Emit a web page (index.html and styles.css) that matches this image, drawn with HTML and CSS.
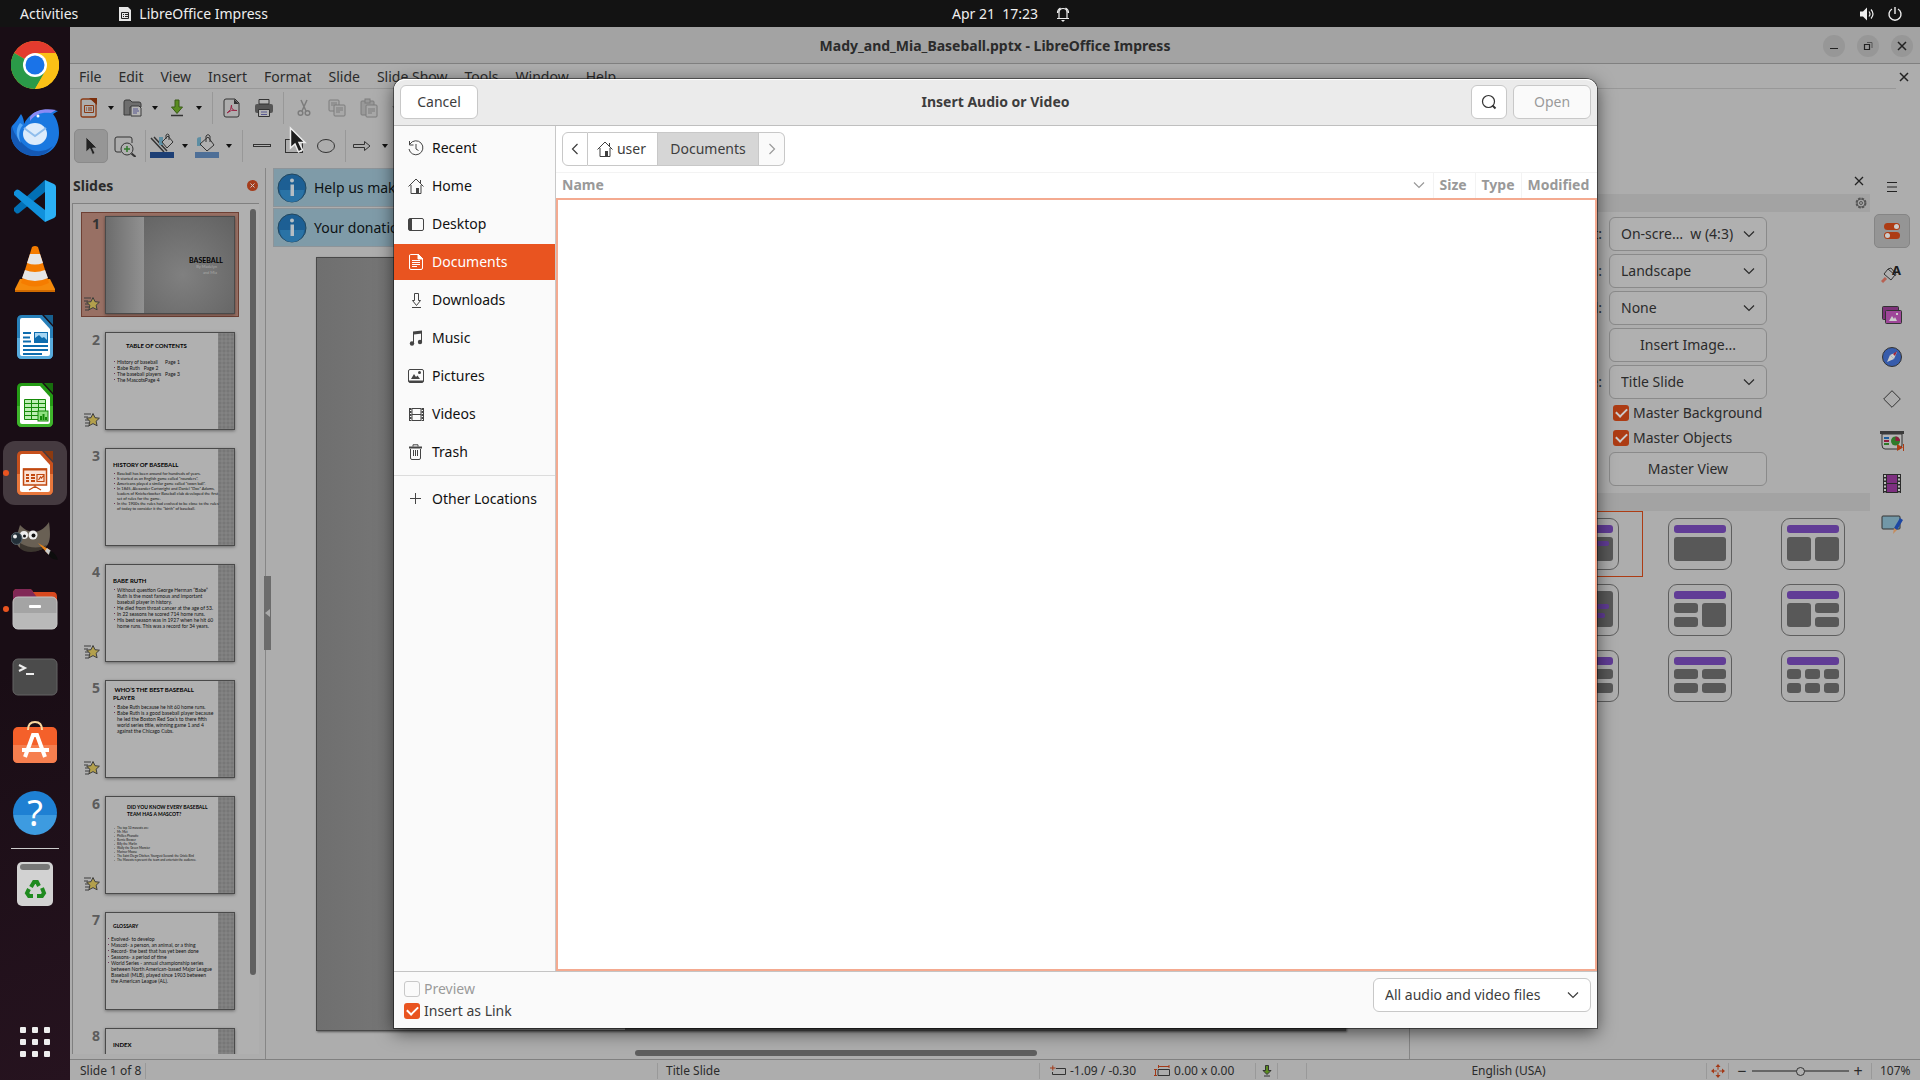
FILE: index.html
```html
<!DOCTYPE html>
<html lang="en">
<head>
    <meta charset="UTF-8">
    <meta name="viewport" content="width=device-width, initial-scale=1.0">
    <title>Mady_and_Mia_Baseball.pptx - LibreOffice Impress</title>
    <link rel="stylesheet" href="styles.css">
</head>
<body>
    <!-- shared icons -->
    <svg class="defs" width="0" height="0" aria-hidden="true">
        <symbol id="chevron" viewBox="0 0 12 12"><path d="M1 3.500l5 5 5-5" fill="none" stroke="currentColor" stroke-width="1.2"/></symbol>
        <symbol id="star" viewBox="0 0 16 16">
            <path d="M0 2h7M0 5h4M1 8h4M1 11h4M1 14h4" stroke="#3d3d3d"/>
            <path d="M9 1.500l2 4.200 4.400.5-3.300 3 1 4.600L9 11.600 4.900 13.800l1-4.600-3.300-3 4.400-.5z" fill="#b3a04c" stroke="#3d3d3d"/>
        </symbol>
        <symbol id="home" viewBox="0 0 16 16">
            <path d="M.5 8.500L8 1l7.500 7.500M3 7v8.500h10V7M12.500 2v3" fill="none" stroke="currentColor"/>
            <path d="M8 10h3v6H8z" fill="currentColor"/>
        </symbol>
        <symbol id="info" viewBox="0 0 30 30">
            <circle cx="15" cy="15" r="14" fill="#1d5f94" stroke="#22475f"/>
            <path d="M3 17a12 12 0 0 0 24 0z" fill="#2a73a6"/>
            <circle cx="15" cy="7.500" r="2" fill="#b5bdc3"/>
            <path d="M13.500 11.500h3.500V23h-3.500z" fill="#b5bdc3"/>
        </symbol>
    </svg>

    <header class="topbar">
        <button class="activities">Activities</button>
        <button class="app-menu">
            <svg width="14" height="16" viewBox="0 0 14 16"><path d="M1 1h9l3 3v11H1z" fill="#e6e6e6"/><path d="M3.500 6.500h7v6h-7zM5 8.500h1M7 8.500h3M5 10.500h1M7 10.500h3" fill="none" stroke="#222"/></svg>
            LibreOffice Impress
        </button>
        <div class="clock">
            <span>Apr 21&nbsp; 17:23</span>
            <svg width="14" height="16" viewBox="0 0 14 16"><path d="M3 12V6.500a4 4 0 0 1 8 0V12M1 12.500h12M1.500 7a5.500 5.500 0 0 1 3-5M12.500 7a5.500 5.500 0 0 0-3-5" fill="none" stroke="#eee" stroke-width="1.200"/><path d="M5 14h4l-2 2z" fill="#eee"/></svg>
        </div>
        <div class="tray">
            <svg width="16" height="16" viewBox="0 0 16 16"><path d="M1 5.500h3L8 1.500v13L4 10.500H1z" fill="#eee"/><path d="M10 5.500q2 2.500 0 5M12 3.500q4 4.500 0 9" fill="none" stroke="#eee" stroke-width="1.200"/></svg>
            <svg width="16" height="16" viewBox="0 0 16 16"><path d="M5 3a6 6 0 1 0 6 0M8 1v7" fill="none" stroke="#eee" stroke-width="1.400"/></svg>
        </div>
    </header>

    <div class="desktop">
        <nav class="dock">
            <a class="launcher" href="#" title="Chrome">
                <svg width="48" height="48" viewBox="0 0 48 48">
                    <circle cx="24" cy="24" r="24" fill="#fbc116"/>
                    <path d="M24 24L3.200 12A24 24 0 0 1 44.800 12z" fill="#e33b2e"/>
                    <path d="M24 24L3.200 12A24 24 0 0 0 24 48L34.500 30z" fill="#2a9a48"/>
                    <path d="M24 12h20.800A24 24 0 0 1 24 48l10.400-18z" fill="#fbc116"/>
                    <circle cx="24" cy="24" r="12" fill="#fff"/><circle cx="24" cy="24" r="9.500" fill="#1a73e8"/>
                </svg>
            </a>
            <a class="launcher" href="#" title="Thunderbird">
                <svg width="48" height="48" viewBox="0 0 48 48">
                    <path d="M1 17C4 14 7 10 10 5c2 3 3 6 3 10C17 6 26 0 36 1c4 0 8 0 11 1l-5 3c4 5 6 12 6 19 0 14-11 23-24 23S0 37 0 25c0-3 0-5 1-8z" fill="#1a78e0"/>
                    <path d="M1 17c2 9 8 16 16 22 8 5 17 4 25-2-5 7-11 10-18 10C11 47 0 37 0 25c0-3 0-5 1-8z" fill="#1459b5"/>
                    <path d="M19 8C23 1 34-1 45 1l-5 3c-9-1-16 1-21 8z" fill="#8a8af5"/>
                    <path d="M12 16c-4 4-5 12-2 18-5-5-6-14-1-20z" fill="#57a8f5"/>
                    <ellipse cx="24" cy="25" rx="12" ry="11" fill="#dcebfb"/>
                    <path d="M13 19l11 8 11-8" fill="none" stroke="#8fbdec" stroke-width="2"/>
                    <circle cx="27" cy="7" r="1.500" fill="#fff"/>
                </svg>
            </a>
            <a class="launcher" href="#" title="Visual Studio Code">
                <svg width="42" height="42" viewBox="0 0 42 42">
                    <path d="M31 0v12L5 33q-2 1-3 0l-2-2q-1-1.500 0-3z" fill="#0270b5"/>
                    <path d="M31 42V30L5 10q-2-1-3 0L0 12q-1 1.500 0 3z" fill="#1191dc"/>
                    <path d="M31 0l9 4q2 1 2 3v28q0 2-2 3l-9 4z" fill="#2bb0f5"/>
                </svg>
            </a>
            <a class="launcher" href="#" title="VLC">
                <svg width="42" height="46" viewBox="0 0 42 46">
                    <path d="M6 33h30l5 10v3H1v-3z" fill="#f58a0b"/><path d="M1 44h40v2H1z" fill="#d06a00"/>
                    <path d="M18 1q3-2 6 0l11 36q-14 7-28 0z" fill="#f57c00"/>
                    <path d="M16 8h10l3 9q-8 3-16 0zM11 24q10 4 20 0l3 8q-13 6-26 0z" fill="#e6e6e6"/>
                </svg>
            </a>
            <a class="launcher" href="#" title="LibreOffice Writer">
                <svg width="38" height="46" viewBox="0 0 38 46">
                    <path d="M6 1h20l11 12v27q0 5-5 5H6q-5 0-5-5V6q0-5 5-5z" fill="#2880b9"/><path d="M1 24h36v16q0 5-5 5H6q-5 0-5-5z" fill="#58abdd"/>
                    <path d="M6 4h18l10 11v25q0 2-2 2H6q-2 0-2-2V6q0-2 2-2z" fill="#fff"/><path d="M28 1h9v10z" fill="#17608f"/>
                    <path d="M7 19h8M7 23.500h7M7 27.500h8M7 32h25M7 36h25M7 40h19" stroke="#0e6cae" stroke-width="2"/>
                    <rect x="18.500" y="18.500" width="13" height="10" fill="#a6d5f3" stroke="#0e6cae"/><path d="M19 28v-4l4-3 3 3 2-1 3 3v2z" fill="#0e6cae"/>
                </svg>
            </a>
            <a class="launcher" href="#" title="LibreOffice Calc">
                <svg width="38" height="46" viewBox="0 0 38 46">
                    <path d="M6 1h20l11 12v27q0 5-5 5H6q-5 0-5-5V6q0-5 5-5z" fill="#249b15"/><path d="M1 24h36v16q0 5-5 5H6q-5 0-5-5z" fill="#3fb52c"/>
                    <path d="M6 4h18l10 11v25q0 2-2 2H6q-2 0-2-2V6q0-2 2-2z" fill="#fff"/><path d="M28 1h9v10z" fill="#176e0d"/>
                    <path d="M8.500 17.500h21v20h-21zM8.500 21.500h21M8.500 25.500h21M8.500 29.500h21M8.500 33.500h21M15.500 17.500v20M22.500 17.500v20" fill="#bdeeb4" stroke="#158a08"/>
                    <rect x="22" y="29" width="10" height="10" fill="#8fe080" stroke="#158a08"/><path d="M25 38v-4M27.500 38v-6M30 38v-3" stroke="#158a08" stroke-width="2"/>
                </svg>
            </a>
            <a class="launcher running current" href="#" title="LibreOffice Impress">
                <svg width="38" height="46" viewBox="0 0 38 46">
                    <path d="M6 1h20l11 12v27q0 5-5 5H6q-5 0-5-5V6q0-5 5-5z" fill="#c6501d"/><path d="M1 24h36v16q0 5-5 5H6q-5 0-5-5z" fill="#e8773c"/>
                    <path d="M6 4h18l10 11v25q0 2-2 2H6q-2 0-2-2V6q0-2 2-2z" fill="#fff"/><path d="M28 1h9v10z" fill="#8c3a10"/>
                    <path d="M7.500 19h23v16h-23z" fill="#fbe3d6" stroke="#c1480f" stroke-width="1.500"/><path d="M10 25h3M15 25h4M10 28h3M15 28h4M10 31h3M15 31h4M7 19.500h24" stroke="#c1480f" stroke-width="2"/>
                    <path d="M21 24.500h7v7h-7zM22.500 30l2-3 1 1 2-2.500M19 35v3M13 40l6-3.500 6 3.500" fill="none" stroke="#c1480f" stroke-width="1.200"/>
                </svg>
            </a>
            <a class="launcher" href="#" title="GIMP">
                <svg width="48" height="40" viewBox="0 0 48 40">
                    <path d="M9 4c5 5 9 7 15 7 6-1 11-5 14-10 1 8 2 17-1 22-4 8-20 9-28 4-4-3-4-9-3-13z" fill="#696054"/>
                    <path d="M9 22q14 8 27 2-6 7-16 7-8 0-11-4z" fill="#3c362f"/>
                    <circle cx="13" cy="14" r="4" fill="#eee"/><circle cx="22" cy="14" r="4.500" fill="#eee"/><circle cx="13.500" cy="15" r="1.500" fill="#111"/><circle cx="22.500" cy="14.500" r="2" fill="#111"/>
                    <ellipse cx="5.500" cy="17.500" rx="5.500" ry="6" fill="#232f38" stroke="#55626b"/><circle cx="4" cy="15.500" r="2" fill="#eee"/>
                    <path d="M27 22l12 7-2 4z" fill="#e8841a"/><path d="M36 27l4 3-2 4-4-4z" fill="#ccc"/><path d="M39 30q6 2 8 9-8-1-9-5z" fill="#0d0d0d"/>
                </svg>
            </a>
            <a class="launcher running" href="#" title="Files">
                <svg width="46" height="42" viewBox="0 0 46 42">
                    <path d="M1 6q0-5 4-5h12q3 0 4 3h20q4 0 4 5v8H1z" fill="#d8491f"/><path d="M1 6q0-5 4-5h12q3 0 4 3l6 8H1z" fill="#812856"/>
                    <rect x="1" y="9" width="44" height="32" rx="5" fill="#a4a4a4"/><path d="M1 25h44v11q0 5-5 5H6q-5 0-5-5z" fill="#b9b9b9"/><rect x="1" y="9" width="44" height="32" rx="5" fill="none" stroke="#c4c4c4"/><rect x="17" y="17" width="12" height="3" rx="1" fill="#fff"/>
                </svg>
            </a>
            <a class="launcher" href="#" title="Terminal">
                <svg width="46" height="38" viewBox="0 0 46 38"><rect x="1" y="1" width="44" height="36" rx="5" fill="#4b4b4b" stroke="#646464"/><path d="M7 7l6 3-6 3M14 16h8" fill="none" stroke="#eee" stroke-width="2"/></svg>
            </a>
            <a class="launcher" href="#" title="Software">
                <svg width="46" height="48" viewBox="0 0 46 48">
                    <rect x="1" y="6" width="44" height="36" rx="5" fill="#f4602a"/><path d="M1 24h44v13q0 5-5 5H6q-5 0-5-5z" fill="#f67f4f"/>
                    <path d="M16 9q0-8 7-8t7 8" fill="none" stroke="#fbd9a0" stroke-width="2"/>
                    <path d="M13 36l8-22h4l8 22M10 29h27" fill="none" stroke="#fff" stroke-width="4"/>
                </svg>
            </a>
            <a class="launcher help" href="#" title="Help"><span class="help-disc">?</span></a>
            <hr class="dock-line">
            <a class="launcher" href="#" title="Trash">
                <svg width="38" height="46" viewBox="0 0 38 46">
                    <rect x="1" y="1" width="36" height="44" rx="5" fill="#d2d2d2"/><rect x="4" y="3" width="30" height="6" rx="3" fill="#777"/>
                    <g fill="none" stroke="#1f8a1f" stroke-width="4"><path d="M15 26l3-5h3l2 4"/><path d="M26 27l2 5-2 3h-5"/><path d="M17 35h-4l-2-3 2-4"/></g>
                </svg>
            </a>
            <a class="launcher apps" href="#" title="Show Applications">
                <svg width="30" height="30" viewBox="0 0 30 30" fill="#eee">
                    <rect width="6" height="6" rx="1"/><rect x="12" width="6" height="6" rx="1"/><rect x="24" width="6" height="6" rx="1"/>
                    <rect y="12" width="6" height="6" rx="1"/><rect x="12" y="12" width="6" height="6" rx="1"/><rect x="24" y="12" width="6" height="6" rx="1"/>
                    <rect y="24" width="6" height="6" rx="1"/><rect x="12" y="24" width="6" height="6" rx="1"/><rect x="24" y="24" width="6" height="6" rx="1"/>
                </svg>
            </a>
        </nav>

        <main class="window">
            <div class="titlebar">
                <h1>Mady_and_Mia_Baseball.pptx - LibreOffice Impress</h1>
                <div class="window-buttons">
                    <button aria-label="Minimize"><svg width="10" height="10" viewBox="0 0 10 10"><path d="M1 7.500h8" stroke="#222"/></svg></button>
                    <button aria-label="Restore"><svg width="10" height="10" viewBox="0 0 10 10" fill="none"><path d="M1.500 3.500h5v5h-5z" stroke="#222" stroke-width="1.200"/><path d="M4 1.500h5V7" stroke="#555"/></svg></button>
                    <button aria-label="Close"><svg width="10" height="10" viewBox="0 0 10 10"><path d="M1 1l8 8M9 1L1 9" stroke="#222" stroke-width="1.500"/></svg></button>
                </div>
            </div>
            <nav class="menubar">
                <a href="#">File</a><a href="#">Edit</a><a href="#">View</a><a href="#">Insert</a><a href="#">Format</a><a href="#">Slide</a><a href="#">Slide Show</a><a href="#">Tools</a><a href="#">Window</a><a href="#">Help</a>
                <button class="close-doc" aria-label="Close document"><svg width="10" height="10" viewBox="0 0 10 10"><path d="M1 1l8 8M9 1L1 9" stroke="#222" stroke-width="1.500"/></svg></button>
            </nav>
            <div class="toolbars">
                <div class="toolbar standard">
                    <button class="tool" title="New"><svg width="18" height="20" viewBox="0 0 18 20" fill="none"><path d="M3 1h9l4 4v12q0 2-2 2H3q-2 0-2-2V3q0-2 2-2z" stroke="#8a3a14" stroke-width="1.300"/><path d="M9 0h8v7z" fill="#7c2f0c"/><path d="M4.500 7.500h9v7h-9zM6 10h1M8 10h4M6 12h1M8 12h4" stroke="#8a3a14"/></svg></button>
                    <button class="caret" aria-label="New options"></button>
                    <button class="tool" title="Open"><svg width="20" height="18" viewBox="0 0 20 18"><path d="M1 16V3q0-2 2-2h4l2 2h7q2 0 2 2v3H7v8z" fill="#6e6e6e" stroke="#3a3a3a"/><path d="M8 7h8l2 2v8H8z" fill="#b5b5b5" stroke="#3a3a3a"/><path d="M10 10h5M10 12h6M10 14h4" stroke="#57578f"/></svg></button>
                    <button class="caret" aria-label="Open options"></button>
                    <button class="tool" title="Save"><svg width="14" height="18" viewBox="0 0 14 18"><path d="M5 1h4v7h3.500L7 14.500 1.500 8H5z" fill="#5a8c20" stroke="#3a5a18"/><path d="M1 16.500h12" stroke="#333" stroke-width="1.500"/></svg></button>
                    <button class="caret" aria-label="Save options"></button>
                    <span class="sep"></span>
                    <button class="tool wide" title="Export as PDF"><svg width="18" height="20" viewBox="0 0 18 20" fill="none"><path d="M3 1h9l4 4v12q0 2-2 2H3q-2 0-2-2V3q0-2 2-2z" stroke="#333"/><path d="M11 1v5h5" fill="#333"/><path d="M4 15q5-3 4.500-8Q8 13 14 12.500 8 11 4 15z" stroke="#9a2848"/></svg></button>
                    <button class="tool wide" title="Print"><svg width="20" height="20" viewBox="0 0 20 20"><rect x="1" y="6" width="18" height="9" rx="2" fill="#555"/><path d="M5 1.500h10V6H5zM4.500 11.500h11v7h-11z" fill="#b4b4b4" stroke="#333"/><path d="M7 14h6M7 16.500h6" stroke="#57578f"/></svg></button>
                    <span class="sep"></span>
                    <button class="tool big" title="Cut"><svg width="14" height="18" viewBox="0 0 14 18" fill="none" stroke="#7c7c7c" stroke-width="1.500"><path d="M4 1l5 11M10 1L5 12"/><circle cx="3.500" cy="14" r="2.300"/><circle cx="10.500" cy="14" r="2.300"/></svg></button>
                    <button class="tool wide" title="Copy"><svg width="18" height="18" viewBox="0 0 18 18" fill="#a8a8a8" stroke="#7c7c7c"><rect x="1" y="1" width="10" height="11" rx="1"/><path d="M3 4h6M3 6h6"/><rect x="6" y="6" width="11" height="11" rx="1"/><path d="M8 9h7M8 11h7M8 13h4"/></svg></button>
                    <button class="tool wide" title="Paste"><svg width="18" height="20" viewBox="0 0 18 20" fill="#999" stroke="#7c7c7c"><rect x="1" y="3" width="13" height="14" rx="1"/><rect x="5" y="1" width="5" height="4"/><rect x="6" y="7" width="11" height="12" rx="1" fill="#a8a8a8"/><path d="M8 11h7M8 13h7M8 15h4"/></svg></button>
                    <button class="caret off" aria-label="Paste options"></button>
                </div>
                <div class="toolbar drawing">
                    <button class="tool big pressed" title="Select"><svg width="14" height="20" viewBox="0 0 14 20"><path d="M2 1v15l4-3.500 2.500 6 2.500-1.200L8.500 12H13z" fill="#222" stroke="#999" stroke-width=".8"/></svg></button>
                    <button class="tool big" title="Zoom &amp; Pan"><svg width="22" height="22" viewBox="0 0 22 22" fill="none" stroke="#333"><path d="M7 17H3q-2 0-2-2V4q0-2 2-2h13q2 0 2 2v4"/><circle cx="13" cy="14" r="6" fill="#b0b0b0"/><path d="M17.500 18.500l4 3.500" stroke-width="2"/><path d="M13 11v6M10 14h6" stroke="#2f7a2a" stroke-width="1.500"/></svg></button>
                    <span class="sep"></span>
                    <button class="tool color" title="Line Color"><svg width="24" height="26" viewBox="0 0 24 26"><path d="M1 5l13 14M4 4l13 14" stroke="#333" stroke-width="1.500"/><path d="M9 4h4v8H9z" fill="#5d8ea3"/><path d="M12 9l6-6 5 6-6 6zM16 6V2q2-2 3 0v5" fill="#b0b0b0" stroke="#333"/><path d="M0 19h24v6H0z" fill="#1d3f75"/></svg></button>
                    <button class="caret" aria-label="Line color options"></button>
                    <button class="tool" title="Fill Color"><svg width="24" height="26" viewBox="0 0 24 26"><path d="M2 6q0-2 4-2v9H2z" fill="#5d8ea3"/><path d="M5 11l8-7 6 8-7 6zM11 9V3q2-3 4 0v6" fill="#b0b0b0" stroke="#333"/><path d="M0 19h24v6H0z" fill="#4e6f97"/></svg></button>
                    <button class="caret" aria-label="Fill color options"></button>
                    <span class="sep"></span>
                    <button class="tool wide" title="Line"><svg width="18" height="4" viewBox="0 0 18 4"><rect x=".5" y=".5" width="17" height="2" fill="#b0b0b0" stroke="#333"/></svg></button>
                    <button class="tool wide" title="Rectangle"><svg width="18" height="14" viewBox="0 0 18 14"><rect x=".5" y=".5" width="17" height="13" fill="none" stroke="#333"/></svg></button>
                    <button class="tool wide" title="Ellipse"><svg width="18" height="14" viewBox="0 0 18 14"><ellipse cx="9" cy="7" rx="8.500" ry="6.500" fill="none" stroke="#333"/></svg></button>
                    <span class="sep"></span>
                    <button class="tool color" title="Arrows"><svg width="18" height="10" viewBox="0 0 18 10"><path d="M.5 3.500h11v-3L17 5l-5.500 4.500v-3H.5z" fill="none" stroke="#333"/></svg></button>
                    <button class="caret" aria-label="Arrow options"></button>
                </div>
                <svg class="pointer" width="18" height="28" viewBox="0 0 18 28"><path d="M1.500 2v20l4.500-4 3.500 8 4-2-3.500-7.500H16z" fill="#1d1d1d" stroke="#eee" stroke-width="1.500"/></svg>
            </div>

            <div class="workspace">
                <aside class="slides-panel">
                    <div class="panel-head">
                        <h2>Slides</h2>
                        <button class="panel-close" aria-label="Close panel"><svg width="11" height="11" viewBox="0 0 11 11"><circle cx="5.500" cy="5.500" r="5.500" fill="#a53d1c"/><path d="M3.500 3.500l4 4M7.500 3.500l-4 4" stroke="#ccc"/></svg></button>
                    </div>
                    <div class="slide-list">
                        <ol class="thumbs">
                            <li class="thumb selected">
                                <div class="mark"><b>1</b><svg width="16" height="16"><use href="#star"/></svg></div>
                                <div class="sheet cover"><h3>BASEBALL</h3><p>By Madelyn<br>and Mia</p></div>
                            </li>
                            <li class="thumb">
                                <div class="mark"><b>2</b><svg width="16" height="16"><use href="#star"/></svg></div>
                                <div class="sheet contents"><h3>TABLE OF CONTENTS</h3>
                                    <ul><li><span>History of baseball</span>Page 1</li><li>Babe Ruth &nbsp; Page 2</li><li><span>The baseball players</span>Page 3</li><li>The MascotsPage 4</li></ul></div>
                            </li>
                            <li class="thumb">
                                <div class="mark"><b>3</b></div>
                                <div class="sheet small"><h3>HISTORY OF BASEBALL</h3>
                                    <ul><li>Baseball has been around for hundreds of years.</li><li>It started as an English game called "rounders".</li><li>Americans played a similar game called "town ball".</li><li>In 1845, Alexander Cartwright and Daniel "Doc" Adams,<br>leaders of Knickerbocker Baseball club developed the first<br>set of rules for the game.</li><li>In the 1900s the rules had evolved to be close to the rules<br>of today to consider it the "birth" of baseball.</li></ul></div>
                            </li>
                            <li class="thumb">
                                <div class="mark"><b>4</b><svg width="16" height="16"><use href="#star"/></svg></div>
                                <div class="sheet"><h3>BABE RUTH</h3>
                                    <ul><li>Without question George Herman “Babe”<br>Ruth is the most famous and important<br>baseball player in history.</li><li>He died from throat cancer at the age of 53.</li><li>In 22 seasons he scored 714 home runs.</li><li>His best season was in 1927 when he hit 60<br>home runs. This was a record for 34 years.</li></ul></div>
                            </li>
                            <li class="thumb">
                                <div class="mark"><b>5</b><svg width="16" height="16"><use href="#star"/></svg></div>
                                <div class="sheet high"><h3>&nbsp;WHO’S THE BEST BASEBALL<br>PLAYER</h3>
                                    <ul><li>Babe Ruth because he hit 60 home runs.</li><li>Babe Ruth is a good baseball player because<br>he led the Boston Red Sox’s to there fifth<br>world series title, winning game 1 and 4<br>against the Chicago Cubs.</li></ul></div>
                            </li>
                            <li class="thumb">
                                <div class="mark"><b>6</b><svg width="16" height="16"><use href="#star"/></svg></div>
                                <div class="sheet mascots"><h3>DID YOU KNOW EVERY BASEBALL<br>TEAM HAS A MASCOT?</h3>
                                    <ul><li>The top 10 mascots are:</li><li>Mr. Met</li><li>Phillies Phanatic</li><li>Bernie Brewer</li><li>Billy the Marlin</li><li>Wally the Green Monster</li><li>Mariner Moose</li><li>The Saint Diego Chicken, Youngest Second: the Oriole Bird</li><li>The Mascots represent the team and entertain the audience.</li></ul></div>
                            </li>
                            <li class="thumb">
                                <div class="mark"><b>7</b></div>
                                <div class="sheet glossary"><h3>GLOSSARY</h3>
                                    <ul><li>Evolved- to develop</li><li>Mascot- a person, an animal, or a thing</li><li>Record- the best that has yet been done</li><li>Seasons- a period of time</li><li>World Series - annual championship series<br>between North American-based Major League<br>Baseball (MLB), played since 1903 between<br>the American League (AL).</li></ul></div>
                            </li>
                            <li class="thumb">
                                <div class="mark"><b>8</b></div>
                                <div class="sheet"><h3>INDEX</h3></div>
                            </li>
                        </ol>
                        <div class="v-scroll"></div>
                    </div>
                    <button class="splitter" aria-label="Hide slide panel"></button>
                </aside>

                <section class="editor">
                    <div class="infobar"><svg width="30" height="30"><use href="#info"/></svg>Help us make LibreOffice even better!</div>
                    <div class="infobar"><svg width="30" height="30"><use href="#info"/></svg>Your donations support our worldwide community.</div>
                    <div class="page"></div>
                    <div class="h-scroll"></div>
                </section>

                <aside class="properties">
                    <div class="deck-head"><button aria-label="Close sidebar"><svg width="10" height="10" viewBox="0 0 10 10"><path d="M1 1l8 8M9 1L1 9" stroke="#222" stroke-width="1.300"/></svg></button></div>
                    <div class="band"><svg width="12" height="12" viewBox="0 0 12 12" fill="none" stroke="#555"><circle cx="6" cy="6" r="4.700" stroke-width="1.500" stroke-dasharray="2.600 1.100"/><circle cx="6" cy="6" r="4"/><circle cx="6" cy="6" r="1.500"/></svg></div>
                    <form class="slide-form">
                        <label for="fmt">Format:</label>
                        <div class="combo"><select id="fmt"><option>On-scre…&nbsp; w (4:3)</option></select><svg width="12" height="12"><use href="#chevron"/></svg></div>
                        <label for="orient">Orientation:</label>
                        <div class="combo"><select id="orient"><option>Landscape</option></select><svg width="12" height="12"><use href="#chevron"/></svg></div>
                        <label for="bg">Background:</label>
                        <div class="combo"><select id="bg"><option>None</option></select><svg width="12" height="12"><use href="#chevron"/></svg></div>
                        <button type="button" class="form-button">Insert Image...</button>
                        <label for="master">Master Slide:</label>
                        <div class="combo"><select id="master"><option>Title Slide</option></select><svg width="12" height="12"><use href="#chevron"/></svg></div>
                        <label class="tick"><input type="checkbox" checked>Master Background</label>
                        <label class="tick"><input type="checkbox" checked>Master Objects</label>
                        <button type="button" class="form-button">Master View</button>
                    </form>
                    <div class="band"></div>
                    <div class="layouts">
                        <button class="layout selected" aria-label="Title slide"><span class="mini"><i class="bar"></i><i class="box w6 sub"><u></u></i></span></button>
                        <button class="layout" aria-label="Title, content"><span class="mini"><i class="bar"></i><i class="box w6"></i></span></button>
                        <button class="layout" aria-label="Title, two content"><span class="mini"><i class="bar"></i><i class="box w3"></i><i class="box w3"></i></span></button>
                        <button class="layout" aria-label="Centered text"><span class="mini"><i class="box w6 full"><u></u><u class="short"></u></i></span></button>
                        <button class="layout" aria-label="Title, two content over content"><span class="mini"><i class="bar"></i><i class="half w3"></i><i class="box w3"></i><i class="half w3"></i></span></button>
                        <button class="layout" aria-label="Title, content and two content"><span class="mini"><i class="bar"></i><i class="box w3"></i><i class="half w3"></i><i class="half w3"></i></span></button>
                        <button class="layout" aria-label="Title, content over content"><span class="mini"><i class="bar"></i><i class="half w6"></i><i class="half w6"></i></span></button>
                        <button class="layout" aria-label="Title, four content"><span class="mini"><i class="bar"></i><i class="half w3"></i><i class="half w3"></i><i class="half w3"></i><i class="half w3"></i></span></button>
                        <button class="layout" aria-label="Title, six content"><span class="mini"><i class="bar"></i><i class="half w2"></i><i class="half w2"></i><i class="half w2"></i><i class="half w2"></i><i class="half w2"></i><i class="half w2"></i></span></button>
                    </div>
                </aside>

                <nav class="tabs">
                    <button title="Sidebar settings"><svg width="10" height="10" viewBox="0 0 10 10"><path d="M0 .5h10M0 5h10M0 9.500h10" stroke="#222"/></svg></button>
                    <button class="on" title="Properties"><svg width="16" height="16" viewBox="0 0 16 16"><rect width="16" height="7" rx="3.500" fill="#ad3c14"/><rect y="9" width="16" height="7" rx="3.500" fill="#ad3c14"/><circle cx="12.500" cy="3.500" r="2.500" fill="#ccc"/><circle cx="3.500" cy="12.500" r="2.500" fill="#ccc"/></svg></button>
                    <button title="Styles"><svg width="22" height="22" viewBox="0 0 22 22"><path d="M1 20l4-4" stroke="#b76253" stroke-width="3"/><path d="M3 12l4-5 7 6-4 5zM7 7l3-1 5 6-1 2" fill="#b0b0b0" stroke="#333"/><text x="11" y="13" font-size="13" font-weight="bold" fill="#1c1c1c">A</text></svg></button>
                    <button title="Gallery"><svg width="20" height="18" viewBox="0 0 20 18"><rect x=".5" y=".5" width="16" height="13" rx="1" fill="#7c3278" stroke="#333"/><rect x="3.500" y="4.500" width="16" height="13" rx="1" fill="#9e4799" stroke="#333"/><path d="M7 15l3-5 2 3 1-2 2 4zM14 7h2v2h-2z" fill="#ccc"/></svg></button>
                    <button title="Navigator"><svg width="20" height="20" viewBox="0 0 20 20"><circle cx="10" cy="10" r="9.500" fill="#375cac" stroke="#333"/><path d="M5 15l3-7 4 4z" fill="#ccc"/><path d="M8 8l7-3-3 7z" fill="#ccc"/><path d="M11 7l4-3-2 5z" fill="#a32236"/></svg></button>
                    <button title="Shapes"><svg width="18" height="18" viewBox="0 0 18 18"><path d="M9 .7L17.300 9 9 17.300.7 9z" fill="none" stroke="#333"/></svg></button>
                    <button title="Slide Transition"><svg width="24" height="20" viewBox="0 0 24 20"><path d="M2 3h20v11q0 4-3 4H5q-3 0-3-4z" fill="#b4b4b4" stroke="#333"/><path d="M0 0h24v3H0z" fill="#3a3a3a"/><path d="M4 7h5" stroke="#1d5fa0" stroke-width="2"/><path d="M4 10h5" stroke="#921b3f" stroke-width="2"/><path d="M4 13h5" stroke="#2f7a2a" stroke-width="2"/><circle cx="15.500" cy="10" r="4.500" fill="#2f7a2a"/><path d="M15.500 10V5.500A4.500 4.500 0 0 1 20 10z" fill="#921b3f"/><path d="M17 13l6 3.500-6 3.500z" fill="#ad3c14"/><path d="M23.500 13v7" stroke="#ad3c14"/></svg></button>
                    <button title="Animation"><svg width="18" height="19" viewBox="0 0 18 19"><path d="M0 0h18v19H0z" fill="#2b2b2b"/><path d="M4 1h10v8H4zM4 10h10v8H4z" fill="#7d2f80"/><path d="M2 1v18M16 1v18" stroke="#bbb" stroke-width="2" stroke-dasharray="2 1.500"/></svg></button>
                    <button title="Master Slides"><svg width="22" height="20" viewBox="0 0 22 20"><rect x="1" y="1" width="18" height="13" rx="1" fill="#7298a8" stroke="#333"/><path d="M19 3l3 2-6 10-3-2z" fill="#1d47a3"/><path d="M13 13l3 2-4 4z" fill="#c58d5e"/></svg></button>
                </nav>
            </div>

            <footer class="statusbar">
                <span class="count">Slide 1 of 8</span>
                <span></span>
                <span>Title Slide</span>
                <span class="position">
                    <svg width="16" height="12" viewBox="0 0 16 12" fill="none"><path d="M6 3.500h9.500v6h-13V7" stroke="#333"/><path d="M0 3h5.500M2.800.5v5" stroke="#a33a18"/></svg>-1.09 / -0.30
                    <svg class="size-icon" width="16" height="12" viewBox="0 0 16 12" fill="none"><path d="M4 4.500h11.500v6H4z" stroke="#333"/><path d="M4 1.500h11M4.500 0v3M15 0v3M1.500 4v7M0 4.500h3M0 10.500h3" stroke="#a33a18"/></svg>0.00 x 0.00
                </span>
                <span><svg width="10" height="12" viewBox="0 0 10 12"><path d="M3.500.5h3v5H9L5 9.500 1 5.500h2.500z" fill="#5a8c20" stroke="#333"/><path d="M2 11h6" stroke="#333"/></svg></span>
                <span></span>
                <span class="lang">English (USA)</span>
                <span><svg width="14" height="14" viewBox="0 0 14 14"><path d="M7 1v12M1 7h12" stroke="#a33a18"/><path d="M7 0l2.500 3h-5zM7 14l2.500-3h-5zM0 7l3-2.500v5zM14 7l-3-2.500v5z" fill="#a33a18"/><circle cx="7" cy="7" r="1.500" fill="#aaa"/></svg></span>
                <span class="zoom">−<input type="range" min="0" max="100" value="50" aria-label="Zoom">+</span>
                <span>107%</span>
            </footer>

            <div class="overlay">
                <div class="dialog" role="dialog" aria-label="Insert Audio or Video">
                    <div class="dialog-head">
                        <button class="btn cancel">Cancel</button>
                        <h2>Insert Audio or Video</h2>
                        <div class="head-right">
                            <button class="btn search" aria-label="Search"><svg width="16" height="16" viewBox="0 0 16 16" fill="none" stroke="#333" stroke-width="1.200"><circle cx="7.500" cy="7.500" r="6"/><path d="M11.500 11.500l3 3" stroke-width="2"/></svg></button>
                            <button class="btn open" disabled>Open</button>
                        </div>
                    </div>
                    <div class="dialog-body">
                        <nav class="places">
                            <a href="#"><svg width="16" height="16" viewBox="0 0 16 16" fill="none" stroke="currentColor"><path d="M2 4a7 7 0 1 1-1 5M8 4v5l2.500 1.500M1.500 1v4h4"/></svg>Recent</a>
                            <a href="#"><svg width="16" height="16"><use href="#home"/></svg>Home</a>
                            <a href="#"><svg width="16" height="16" viewBox="0 0 16 16"><rect x=".5" y="2.500" width="15" height="12" rx="1.500" fill="none" stroke="currentColor"/><path d="M1 3h3v11H1z" fill="currentColor"/></svg>Desktop</a>
                            <a href="#" class="active"><svg width="16" height="16" viewBox="0 0 16 16" fill="none" stroke="currentColor"><path d="M2.500.5H10l4.500 4.500v9q0 1.500-1.500 1.500H3q-1.500 0-1.500-1.500V2q0-1.500 1-1.500zM4 6.500h8M4 8.500h8M4 10.500h8M4 12.500h5"/><path d="M10 0v5h5z" fill="currentColor"/></svg>Documents</a>
                            <a href="#"><svg width="16" height="16" viewBox="0 0 16 16" fill="none" stroke="currentColor"><path d="M6.500 1.500h4v7h2l-4 5-4-5h2zM4 15.500h9"/></svg>Downloads</a>
                            <a href="#"><svg width="16" height="16" viewBox="0 0 16 16" fill="currentColor"><path d="M5 1.500L14 .5v3L6 4.500v9H5z"/><path d="M13 2h1v10h-1z"/><circle cx="4" cy="13.500" r="2.200"/><circle cx="12" cy="12" r="2.200"/></svg>Music</a>
                            <a href="#"><svg width="16" height="16" viewBox="0 0 16 16"><rect x=".5" y="1.500" width="15" height="13" rx="1.500" fill="none" stroke="currentColor"/><path d="M1 12.500h14V14H1zM3 11l3-5 2 3 1.500-1.500L12 11z" fill="currentColor"/><circle cx="11.500" cy="4.500" r="1.500" fill="currentColor"/></svg>Pictures</a>
                            <a href="#"><svg width="16" height="16" viewBox="0 0 16 16" fill="none" stroke="currentColor"><path d="M4 2.500h9v12H4zM4 8.500h9"/><path d="M2.500 2v13M14.500 2v13" stroke-width="2" stroke-dasharray="2 1"/><path d="M1.500 2v13M15.500 2v13"/></svg>Videos</a>
                            <a href="#"><svg width="16" height="16" viewBox="0 0 16 16" fill="none" stroke="currentColor"><path d="M2.500 5v9q0 1.500 1.500 1.500h7q1.500 0 1.500-1.500V5M5.500 6v6M7.500 6v6M9.500 6v6"/><path d="M1 3.500h13" stroke-width="2"/><path d="M5 2.500V.8h5v1.700" /></svg>Trash</a>
                            <hr>
                            <a href="#"><svg width="16" height="16" viewBox="0 0 16 16"><path d="M7.500 2v11M2 7.500h11" stroke="currentColor"/></svg>Other Locations</a>
                        </nav>
                        <section class="files">
                            <div class="pathbar">
                                <button class="nav-arrow" aria-label="Back"><svg width="8" height="12" viewBox="0 0 8 12"><path d="M6.500 1L1.500 6l5 5" fill="none" stroke="currentColor" stroke-width="1.200"/></svg></button>
                                <button class="crumb-home"><svg width="16" height="16"><use href="#home"/></svg>user</button>
                                <button class="crumb-on">Documents</button>
                                <button class="nav-arrow off" aria-label="Forward" disabled><svg width="8" height="12" viewBox="0 0 8 12"><path d="M1.500 1l5 5-5 5" fill="none" stroke="currentColor" stroke-width="1.200"/></svg></button>
                            </div>
                            <table class="columns">
                                <thead><tr>
                                    <th class="name"><span>Name<svg width="12" height="12"><use href="#chevron"/></svg></span></th>
                                    <th class="size">Size</th><th class="type">Type</th><th class="modified">Modified</th>
                                </tr></thead>
                            </table>
                            <div class="file-list"></div>
                        </section>
                    </div>
                    <div class="dialog-foot">
                        <div class="options">
                            <label class="tick off"><input type="checkbox" disabled>Preview</label>
                            <label class="tick"><input type="checkbox" checked>Insert as Link</label>
                        </div>
                        <div class="combo filter"><select aria-label="File type"><option>All audio and video files</option></select><svg width="12" height="12"><use href="#chevron"/></svg></div>
                    </div>
                </div>
            </div>
        </main>
    </div>
</body>
</html>
```
FILE: styles.css
```css
* {
    box-sizing: border-box;
}
body {
    margin: 0;
    height: 100vh;
    display: flex;
    flex-direction: column;
    overflow: hidden;
    font-family: "Noto Sans", "Open Sans", sans-serif;
    font-size: 14px;
    line-height: 20px;
    color: #2b2b2b;
    background: #1b0f17;
}
h1, h2, h3, p, ol, ul {
    margin: 0;
    padding: 0;
    list-style: none;
}
button, select, input {
    font: inherit;
    color: inherit;
    margin: 0;
}
button {
    background: none;
    border: none;
    padding: 0;
    display: flex;
    align-items: center;
    justify-content: center;
}
a {
    color: inherit;
    text-decoration: none;
}
svg {
    flex: none;
    display: block;
}
.defs {
    position: absolute;
}

/* top bar */
.topbar {
    flex: none;
    height: 27px;
    background: #131313;
    color: #eee;
    display: grid;
    grid-template-columns: auto 1fr 1fr;
    position: relative;
    align-items: center;
}
.activities {
    margin-left: 20px;
}
.app-menu {
    justify-content: flex-start;
    gap: 7px;
    margin-left: 40px;
}
.clock {
    position: absolute;
    left: 0;
    right: 0;
    display: flex;
    justify-content: center;
    gap: 18px;
    padding-left: 102px;
    align-items: center;
}
.tray {
    display: flex;
    justify-content: flex-end;
    gap: 12px;
    padding-right: 17px;
}

/* dock */
.desktop {
    flex: 1;
    min-height: 0;
    display: flex;
}
.dock {
    flex: none;
    width: 70px;
    padding: 6px 3px;
    display: flex;
    flex-direction: column;
    gap: 4px;
    background: linear-gradient(160deg, #190d15 60%, #26131f);
}
.launcher {
    height: 64px;
    flex: none;
    display: flex;
    align-items: center;
    justify-content: center;
    border-radius: 12px;
    position: relative;
}
.launcher.current {
    background: #453a40;
}
.launcher.running::before {
    content: "";
    position: absolute;
    left: 0;
    width: 6px;
    height: 6px;
    border-radius: 50%;
    background: #e95420;
}
.help-disc {
    width: 44px;
    height: 44px;
    border-radius: 50%;
    background: linear-gradient(#1e80d3 54%, #3d9be0 54%);
    color: #fff;
    font-size: 36px;
    line-height: 44px;
    text-align: center;
}
.dock-line {
    width: 48px;
    height: 1px;
    border: none;
    background: #ccc;
    margin: -1px auto;
}
.apps {
    margin-top: auto;
}

/* main window */
.window {
    flex: 1;
    min-width: 0;
    background: #adadad;
    display: flex;
    flex-direction: column;
    position: relative;
}
.titlebar {
    flex: none;
    height: 37px;
    padding-top: 1px;
    background: #a3a3a3;
    border-bottom: 1px solid #808080;
    display: grid;
    grid-template-columns: 1fr auto 1fr;
    align-items: center;
}
.titlebar h1 {
    grid-column: 2;
    font-size: 14px;
}
.window-buttons {
    display: flex;
    justify-content: flex-end;
    gap: 12px;
    padding-right: 7px;
}
.window-buttons button {
    width: 22px;
    height: 22px;
    border-radius: 50%;
    background: #979797;
}
.menubar {
    flex: none;
    height: 25px;
    display: flex;
    align-items: center;
    gap: 17px;
    padding: 1px 0 0 9px;
    margin-right: 24px;
    border-bottom: 1px solid #989898;
}
.close-doc {
    position: absolute;
    right: 11px;
}
.toolbars {
    flex: none;
    position: relative;
    height: 79px;
}
.toolbar {
    height: 38px;
    display: flex;
    align-items: center;
}
.standard {
    padding-left: 7px;
}
.drawing {
    padding-left: 4px;
}
.tool {
    width: 24px;
    height: 34px;
}
.tool.color {
    width: 26px;
}
.tool.wide {
    width: 32px;
}
.tool.big {
    width: 34px;
}
.tool.pressed {
    background: #969696;
    border: 1px solid #8a8a8a;
    border-radius: 5px;
}
.caret {
    width: 20px;
    height: 34px;
}
.caret::before {
    content: "";
    border: 3px solid transparent;
    border-top: 4px solid #111;
    border-bottom: none;
}
.caret.off::before {
    border-top-color: #7c7c7c;
}
.sep {
    width: 1px;
    height: 32px;
    margin: 0 3px;
    background: #989898;
}
.pointer {
    position: absolute;
    left: 219px;
    top: 37px;
}
.workspace {
    flex: 1;
    min-height: 0;
    display: flex;
}

/* slide thumbnails */
.slides-panel {
    flex: none;
    width: 196px;
    display: flex;
    flex-direction: column;
    border-right: 1px solid #868686;
    padding: 0 6px 5px 2px;
    position: relative;
}
.panel-head {
    height: 35px;
    display: flex;
    align-items: center;
    justify-content: space-between;
    padding: 0 1px;
}
.panel-head h2 {
    font-size: 14px;
}
.slide-list {
    flex: 1;
    min-height: 0;
    display: flex;
    overflow: hidden;
    border-left: 1px solid #808080;
    border-top: 1px solid #808080;
    background: #b0b0b0;
}
.thumbs {
    flex: 1;
    padding: 8px 0 0 8px;
}
.thumb {
    width: 158px;
    height: 105px;
    margin-bottom: 11px;
    padding-left: 2px;
    display: flex;
    gap: 5px;
    border: 1px solid transparent;
}
.thumb.selected {
    background: #987064;
    border-color: #6e4034;
}
.mark {
    width: 16px;
    display: flex;
    flex-direction: column;
    justify-content: space-between;
    padding-bottom: 4px;
    color: #5c5c5c;
}
.mark b {
    text-align: right;
    color: inherit;
    line-height: 22px;
}
.selected .mark {
    color: #333;
}
.sheet {
    width: 130px;
    height: 98px;
    margin-top: 3px;
    padding: 12px 0 0 7px;
    border: 1px solid #4a4a4a;
    box-shadow: 0 1px 3px rgba(0, 0, 0, 0.4);
    background: radial-gradient(circle at 1px 1px, #787878 1px, transparent 2px) 112px 0 / 4px 4px, #828282;
    background: linear-gradient(90deg, #b0b0b0 112px, transparent 112px), radial-gradient(circle, #777 1px, #838383 2px) 0 0 / 4px 4px;
    font-family: Lato, sans-serif;
    font-size: 5px;
    line-height: 6px;
    overflow: hidden;
    white-space: nowrap;
    color: #111;
}
.sheet h3 {
    font-size: 6px;
    line-height: 8px;
    color: #000;
    margin-bottom: 2px;
}
.sheet ul li {
    padding-left: 4px;
    position: relative;
}
.sheet ul li::before {
    content: "";
    position: absolute;
    left: 1px;
    top: 2px;
    width: 1px;
    height: 1px;
    background: #6b3a5a;
}
.sheet.cover {
    padding: 39px 11px 0 0;
    text-align: right;
    font-size: 4px;
    color: #aaa;
    background: linear-gradient(90deg, #6c6c6c, #919191 38px, transparent 38px), radial-gradient(circle at 60% 60%, #808080, #5a5a5a);
}
.cover h3 {
    margin: 0;
    font-size: 7px;
}
.cover p {
    padding-right: 6px;
}
.sheet.contents {
    padding-top: 9px;
}
.contents h3 {
    margin: 0 0 9px 13px;
}
.contents span {
    display: inline-block;
    width: 48px;
}
.sheet.small ul {
    font-size: 4px;
    line-height: 5px;
}
.sheet.high {
    padding-top: 5px;
}
.sheet.mascots {
    padding-top: 7px;
    font-size: 3px;
    line-height: 4px;
}
.mascots h3 {
    margin: 0 0 8px 14px;
    font-size: 5px;
    line-height: 7px;
}
.mascots ul li::before {
    background: #888;
}
.sheet.glossary {
    padding: 9px 0 0 1px;
}
.glossary h3 {
    margin: 0 0 6px 6px;
    font-size: 5px;
}
.v-scroll {
    width: 6px;
    height: 766px;
    margin: 5px 3px 0 0;
    border-radius: 3px;
    background: #606060;
}
.splitter {
    position: absolute;
    right: -6px;
    top: 408px;
    width: 7px;
    height: 74px;
    background: #6c6c6c;
}
.splitter::before {
    content: "";
    border: 4px solid transparent;
    border-right: 5px solid #aaa;
    border-left: none;
}

/* editing area */
.editor {
    flex: 1;
    min-width: 0;
    display: flex;
    flex-direction: column;
    padding-left: 7px;
    border-right: 1px solid #868686;
}
.infobar {
    flex: none;
    height: 39px;
    margin-bottom: 1px;
    padding-left: 3px;
    display: flex;
    align-items: center;
    gap: 7px;
    color: #0d1214;
    background: #7f9ba8;
    border: 1px solid #8d9499;
}
.page {
    flex: 1;
    margin: 9px 63px 19px 43px;
    border: 1px solid #484848;
    box-shadow: 1px 1px 2px rgba(0, 0, 0, 0.5);
    background: linear-gradient(90deg, #6f6f6f, #8c8c8c 30%, #4a4a4a 30%);
}
.h-scroll {
    width: 402px;
    height: 6px;
    margin: 0 0 3px 362px;
    border-radius: 3px;
    background: #5e5e5e;
}

/* properties */
.properties {
    flex: none;
    width: 460px;
}
.deck-head {
    height: 26px;
    display: flex;
    justify-content: flex-end;
    align-items: center;
    padding-right: 6px;
}
.band {
    height: 18px;
    background: #a3a3a3;
    display: flex;
    justify-content: flex-end;
    align-items: center;
    padding-right: 3px;
}
.slide-form {
    display: grid;
    grid-template-columns: 192px 158px;
    column-gap: 7px;
    row-gap: 3px;
    padding: 5px 0 7px;
}
.slide-form > label {
    text-align: right;
    line-height: 34px;
}
.combo {
    display: grid;
    align-items: center;
    height: 34px;
}
.combo select {
    grid-area: 1 / 1;
    width: 100%;
    height: 34px;
    appearance: none;
    border: 1px solid #8a8a8a;
    border-radius: 6px;
    padding: 0 0 0 11px;
    background: #b0b0b0;
}
.combo svg {
    grid-area: 1 / 1;
    justify-self: end;
    margin-right: 12px;
    pointer-events: none;
}
.form-button {
    grid-column: 2;
    height: 34px;
    border: 1px solid #8a8a8a;
    border-radius: 6px;
    background: #b0b0b0;
}
.tick {
    display: flex;
    align-items: center;
    gap: 4px;
}
.slide-form .tick {
    grid-column: 2;
    padding-left: 4px;
    line-height: 22px;
}
.tick input {
    appearance: none;
    width: 16px;
    height: 16px;
    border-radius: 3px;
    background: #ad3c14;
    display: grid;
    place-items: center;
}
.tick input:checked::before {
    content: "";
    width: 9px;
    height: 5px;
    margin-bottom: 3px;
    border: solid #ccc;
    border-width: 0 0 2px 2px;
    transform: rotate(-45deg);
}
.layouts {
    display: grid;
    grid-template-columns: repeat(3, 113px);
    grid-auto-rows: 66px;
    padding-left: 120px;
}
.layout.selected {
    border: 1px solid #ad3c14;
}
.mini {
    width: 64px;
    height: 52px;
    padding: 6px 5px 7px;
    border: 1px solid #5e5e5e;
    border-radius: 9px;
    display: grid;
    grid-template-columns: repeat(6, 1fr);
    grid-template-rows: 8px 10px 10px;
    grid-auto-flow: row dense;
    gap: 4px;
}
.bar {
    grid-column: span 6;
    background: #613c96;
    border-radius: 3px;
}
.box, .half {
    background: #585858;
    border-radius: 3px;
}
.box {
    grid-row: span 2;
}
.box.sub {
    padding: 4px 4px 0 20px;
}
.box.full {
    grid-row: span 3;
    padding: 13px 4px 0 20px;
}
.box u {
    display: block;
    height: 5px;
    margin-bottom: 4px;
    border-radius: 2px;
    background: #613c96;
}
.box .short {
    margin-right: 4px;
}
.w2 {
    grid-column: span 2;
}
.w3 {
    grid-column: span 3;
}
.w6 {
    grid-column: span 6;
}
.tabs {
    flex: none;
    width: 50px;
    display: flex;
    flex-direction: column;
    align-items: center;
    gap: 8px;
    padding: 2px 6px 0 0;
}
.tabs button {
    width: 36px;
    height: 34px;
    border-radius: 5px;
}
.tabs button:first-child {
    margin-bottom: 2px;
}
.tabs .on {
    background: #959595;
    border: 1px solid #858585;
}

/* status bar */
.statusbar {
    flex: none;
    height: 21px;
    border-top: 1px solid #808080;
    display: grid;
    grid-template-columns: 76px 512fr 382fr 216px 22px 29px 400fr 22px 143px 48px;
    font-size: 12px;
    padding: 3px 0 1px;
}
.statusbar > span {
    border-right: 1px solid #999;
    padding: 0 4px 0 8px;
    display: flex;
    align-items: center;
    white-space: nowrap;
    line-height: 16px;
}
.statusbar > span:last-child {
    border: none;
}
.statusbar > span:nth-child(5),
.statusbar > span:nth-child(8) {
    padding: 0;
    justify-content: center;
}
.statusbar .count {
    padding-left: 10px;
}
.statusbar .position {
    gap: 4px;
    padding-left: 10px;
}
.size-icon {
    margin-left: 14px;
}
.statusbar .lang {
    justify-content: center;
}
.statusbar .zoom {
    font-size: 16px;
    justify-content: center;
    gap: 5px;
    padding: 0;
}
.zoom input {
    appearance: none;
    width: 97px;
    height: 2px;
    background: #666;
}
.zoom input::-webkit-slider-thumb {
    appearance: none;
    width: 9px;
    height: 9px;
    border: 1px solid #333;
    border-radius: 50%;
    background: #b0b0b0;
}

/* file dialog */
.overlay {
    position: absolute;
    inset: 0;
    padding: 52px 323px 52px 324px;
    display: flex;
}
.dialog {
    flex: 1;
    min-width: 0;
    display: flex;
    flex-direction: column;
    background: #fafafa;
    border-radius: 11px 11px 0 0;
    box-shadow: 0 0 0 1px rgba(0, 0, 0, 0.45), 0 4px 18px rgba(0, 0, 0, 0.6);
    color: #3d3d3d;
}
.dialog-head {
    flex: none;
    height: 47px;
    background: #ebebeb;
    border-top: 1px solid #fff;
    border-bottom: 1px solid #bfbfbf;
    border-radius: 11px 11px 0 0;
    display: grid;
    grid-template-columns: 1fr auto 1fr;
    align-items: center;
    padding: 0 6px 1px;
}
.dialog-head h2 {
    font-size: 14px;
}
.head-right {
    display: flex;
    justify-content: flex-end;
    gap: 6px;
}
.btn {
    height: 34px;
    background: #fff;
    border: 1px solid #c8c8c8;
    border-radius: 6px;
}
.cancel {
    width: 78px;
}
.search {
    width: 36px;
}
.open {
    width: 78px;
    background: #fafafa;
    color: #9a9a9a;
}
.dialog-body {
    flex: 1;
    min-height: 0;
    display: flex;
    border-bottom: 1px solid #c4c4c4;
}
.places {
    flex: none;
    width: 162px;
    padding-top: 4px;
    border-right: 1px solid #c8c8c8;
    color: #111;
}
.places a {
    height: 36px;
    margin-bottom: 2px;
    padding-left: 14px;
    display: flex;
    align-items: center;
    gap: 8px;
}
.places svg {
    color: #444;
}
.places .active,
.places .active svg {
    background: #e95420;
    color: #fff;
}
.places hr {
    height: 1px;
    border: none;
    background: #dcdcdc;
    margin: 5px 0;
}
.files {
    flex: 1;
    min-width: 0;
    display: flex;
    flex-direction: column;
    background: #fff;
}
.pathbar {
    flex: none;
    display: flex;
    margin: 6px;
}
.pathbar button {
    height: 34px;
    border: 1px solid #c8c8c8;
    border-left-width: 0;
    background: #fff;
}
.pathbar button:first-child {
    border-left-width: 1px;
    border-radius: 6px 0 0 6px;
}
.pathbar button:last-child {
    border-radius: 0 6px 6px 0;
}
.pathbar .nav-arrow {
    width: 26px;
}
.pathbar .nav-arrow.off {
    color: #9a9a9a;
    background: #fafafa;
}
.pathbar .crumb-home {
    width: 70px;
    gap: 4px;
    padding-right: 2px;
}
.pathbar .crumb-on {
    width: 101px;
    background: #d6d6d6;
}
.columns {
    flex: none;
    width: 100%;
    table-layout: fixed;
    border-collapse: collapse;
    color: #999;
}
.columns th {
    height: 25px;
    padding: 0 0 0 6px;
    text-align: left;
    border-top: 1px solid #f3f3f3;
    border-left: 1px solid #f3f3f3;
    line-height: 20px;
}
.columns span {
    display: flex;
    align-items: center;
    justify-content: space-between;
    padding-right: 8px;
}
.columns .name {
    border-left: none;
}
.columns .size {
    width: 42px;
}
.columns .type {
    width: 46px;
}
.columns .modified {
    width: 76px;
}
.file-list {
    flex: 1;
    border: 2px solid #f4aa90;
}
.dialog-foot {
    flex: none;
    height: 56px;
    display: flex;
    justify-content: space-between;
    align-items: flex-start;
    padding: 6px 6px 0 10px;
}
.options .tick {
    height: 22px;
}
.options .tick.off {
    color: #9a9a9a;
}
.options input {
    background: #e95420;
}
.options input:checked::before {
    border-color: #fff;
}
.options .off input {
    background: #fafafa;
    border: 1px solid #c8c8c8;
}
.filter {
    width: 218px;
}
.filter select {
    background: #fff;
    border-color: #c8c8c8;
}
```
